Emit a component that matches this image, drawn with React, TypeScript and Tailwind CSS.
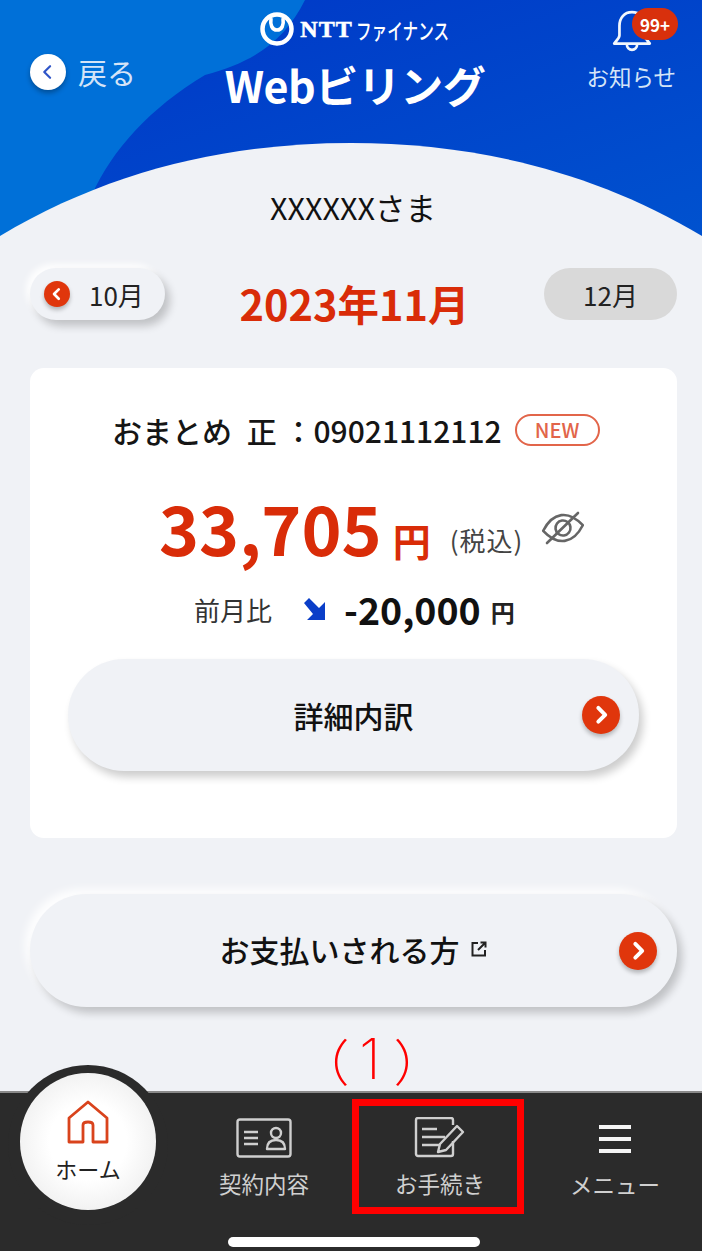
const jp = { fontFamily: '"Noto Sans CJK JP", "Noto Sans", sans-serif' };

function RedChevron({ size, dir = "right" }: { size: number; dir?: "left" | "right" }) {
  return (
    <span
      className="flex shrink-0 items-center justify-center rounded-full bg-[#e0360c] shadow-[0_3px_4px_rgba(0,0,0,0.25)]"
      style={{ width: size, height: size }}
    >
      <svg viewBox="0 0 24 24" width={size * 0.62} height={size * 0.62} fill="none" stroke="white" strokeWidth="4" strokeLinecap="round" strokeLinejoin="round">
        <path d={dir === "right" ? "M9.5 5l7 7-7 7" : "M14.5 5l-7 7 7 7"} />
      </svg>
    </span>
  );
}

function Header() {
  return (
    <div className="relative h-[240px] shrink-0 text-white">
      <svg className="absolute inset-0" width="702" height="240" viewBox="0 0 702 240">
        <defs>
          <linearGradient id="hdr" x1="0" y1="0" x2="1" y2="1">
            <stop offset="0" stopColor="#0036c6" />
            <stop offset="1" stopColor="#0052cf" />
          </linearGradient>
        </defs>
        <rect width="702" height="240" fill="url(#hdr)" />
        <path d="M0 0H305C285 40 255 62 205 75C150 108 112 150 92 195L0 240Z" fill="#0070d8" />
        <path d="M0 240V236C110 170 230 143 351 143C472 143 592 170 702 236V240Z" fill="#f0f2f6" />
      </svg>
      <div className="relative grid grid-cols-[1fr_auto_1fr]">
        <div className="flex items-center gap-[12px] self-start pl-[30px] pt-[54px]">
          <span className="flex h-[36px] w-[36px] items-center justify-center rounded-full bg-white shadow-[0_3px_5px_rgba(0,0,0,0.3)]">
            <svg viewBox="0 0 24 24" width="20" height="20" fill="none" stroke="#2f55c8" strokeWidth="2.6" strokeLinecap="round" strokeLinejoin="round">
              <path d="M14.5 5l-7 7 7 7" />
            </svg>
          </span>
          <span className="text-[29px] leading-[36px] text-[#d5e4f7]">戻る</span>
        </div>
        <div className="flex flex-col items-center pt-[10px] pl-[8px]">
          <div className="flex h-[38px] items-center gap-[5px]">
            <svg viewBox="0 0 36 36" width="36" height="36" fill="none" stroke="white">
              <circle cx="18" cy="18" r="14.5" strokeWidth="4.5" />
              <path d="M12 7c-1 7 1 12 6 12s7-5 6-12" strokeWidth="3.600" />
            </svg>
            <span className="flex items-center font-bold leading-none whitespace-nowrap">
              <span className="font-['Liberation_Serif'] text-[24px] tracking-[1px] [-webkit-text-stroke:0.6px_white]">NTT</span>
              <span className="ml-[3px] inline-block w-[95px] origin-left scale-x-[0.71] text-[22px] font-medium">ファイナンス</span>
            </span>
          </div>
          <span className="mt-[6px] text-[43px] leading-[60px] font-bold tracking-[-0.5px] whitespace-nowrap">Webビリング</span>
        </div>
        <div className="flex flex-col items-end pr-[26px] pt-[8px]">
          <div className="relative mr-[22px] h-[46px] w-[44px]">
            <svg viewBox="0 0 40 44" width="44" height="46" fill="none" stroke="#f2f7fd" strokeWidth="2.600" strokeLinejoin="round">
              <path d="M20 4c-7.500 0-12 5.500-12 13v9c0 3-3 5-5 8h34c-2-3-5-5-5-8v-9c0-7.500-4.500-13-12-13z" />
              <path d="M15 34c0 4 2.500 6 5 6s5-2 5-6" />
            </svg>
            <span className="absolute right-[-24px] top-0 flex h-[32px] w-[46px] items-center justify-center rounded-[16px] bg-[#d8300c] text-[17px] font-bold leading-none">99+</span>
          </div>
          <span className="mt-[8px] text-[22.5px] leading-[28px] text-[#d5e4f7]">お知らせ</span>
        </div>
      </div>
      <div className="absolute inset-x-0 top-[185px] pl-[4px] text-center text-[30.5px] leading-[44px] text-[#111]">XXXXXXさま</div>
    </div>
  );
}

function MonthRow() {
  return (
    <div className="mt-[28px] flex h-[64px] shrink-0 items-start justify-between pl-[30px] pr-[25px]">
      <div className="flex h-[52px] w-[135px] items-center gap-[19px] rounded-full bg-[#f0f2f6] pl-[14px] shadow-[5px_6px_8px_rgba(0,0,0,0.2),-4px_-4px_6px_rgba(255,255,255,0.9)]">
        <RedChevron size={26} dir="left" />
        <span className="text-[26px] text-[#222]">10月</span>
      </div>
      <div className="mt-[9px] text-[41.5px] leading-[52px] font-bold text-[#d92c08]">2023年11月</div>
      <div className="flex h-[52px] w-[133px] items-center justify-center rounded-full bg-[#d9d9d9] text-[26px] text-[#222]">12月</div>
    </div>
  );
}

function PillButton({ label, className, textClass, chevronGap, external }: { label: string; className: string; textClass: string; chevronGap: string; external?: boolean }) {
  return (
    <div className={`relative flex items-center justify-center rounded-full bg-[#f0f2f6] ${className}`}>
      <span className={`flex items-center gap-[10px] text-[30px] font-medium leading-none text-[#111] ${textClass}`}>
        {label}
        {external && (
          <svg viewBox="0 0 18 18" width="18" height="18" fill="none" stroke="#222" strokeWidth="2">
            <path d="M8 3H2.500v12.500H15V10" />
            <path d="M8 10l7-7M10.500 2.500h5v5" />
          </svg>
        )}
      </span>
      <span className={`absolute top-1/2 -translate-y-1/2 ${chevronGap}`}>
        <RedChevron size={38} />
      </span>
    </div>
  );
}

function Card() {
  return (
    <div className="ml-[30px] mr-[25px] mt-[36px] h-[470px] shrink-0 rounded-[14px] bg-white">
      <div className="flex items-center pl-[82px] pt-[41px]">
        <span className="text-[30px] leading-[42px] font-medium text-[#151515] whitespace-nowrap">
          おまとめ <span className="ml-[8px]">正 ：09021112112</span>
        </span>
        <span className="ml-[13px] flex h-[32px] w-[85px] items-center justify-center rounded-full border-2 border-[#e2654a] text-[20px] font-medium text-[#e2654a]">NEW</span>
      </div>
      <div className="mt-[29px] flex items-baseline pl-[129px]">
        <span className="text-[68px] leading-[94px] font-bold text-[#d92c08]">33,705</span>
        <span className="ml-[11px] text-[38px] leading-none font-bold text-[#d92c08]">円</span>
        <span className="ml-[19px] -translate-y-[5px] text-[26px] leading-none tracking-[1px] text-[#444]">(税込)</span>
        <svg className="ml-[18px] mt-[31px] self-start" viewBox="0 0 44 34" width="44" height="34" fill="none" stroke="#666" strokeWidth="2.600" strokeLinecap="round" strokeLinejoin="round">
          <g transform="rotate(-8 22 17)">
            <path d="M2 17C9 7 15 4 22 4s13 3 20 13c-7 10-13 13-20 13S9 27 2 17z" />
            <circle cx="22" cy="17" r="7.500" />
          </g>
          <path d="M6 32L37 2" />
        </svg>
      </div>
      <div className="mt-[9px] flex items-center pl-[164px]">
        <span className="text-[26px] text-[#333]">前月比</span>
        <svg className="ml-[30px]" viewBox="0 0 26 26" width="26" height="26" fill="#0a3ec8">
          <path d="M2 7L7 2l10 10 6-6v18H5l6-6z" />
        </svg>
        <span className="ml-[16px] text-[37.5px] leading-[52px] font-bold text-[#111]">-20,000</span>
        <span className="ml-[10px] mt-[6px] text-[24px] font-bold text-[#222]">円</span>
      </div>
      <div className="mt-[24px] px-[38px]">
        <PillButton label="詳細内訳" className="h-[112px] shadow-[4px_6px_8px_rgba(0,0,0,0.2)]" textClass="" chevronGap="right-[19px]" />
      </div>
    </div>
  );
}

function NavItem({ label, icon, className }: { label: string; icon: React.ReactNode; className: string }) {
  return (
    <div className={`flex flex-col items-center ${className}`}>
      <div className="flex h-[44px] items-center">{icon}</div>
      <span className="mt-[8px] text-[22.5px] leading-[30px] text-[#d0d0d0] whitespace-nowrap">{label}</span>
    </div>
  );
}

function BottomNav() {
  return (
    <div className="relative h-[160px] shrink-0 border-t-2 border-[#8a8a8a] bg-[#2b2b2b]">
      <div className="absolute inset-x-0 bottom-0 top-[-28px] overflow-hidden">
        <div className="ml-[8px] h-[160px] w-[160px] rounded-full bg-[#2b2b2b]" />
      </div>
      <div className="absolute left-[20px] top-[-20px] flex h-[137px] w-[136px] flex-col items-center rounded-full bg-[radial-gradient(circle,#ffffff_40%,#e6e6e6_100%)] pt-[27px]">
        <svg viewBox="0 0 44 44" width="44" height="44" fill="none" stroke="#d9431c" strokeWidth="2.800" strokeLinejoin="round">
          <path d="M3 18L22 2l19 16v24H27V25c0-2-2-3-5-3s-5 1-5 3v17H3z" />
        </svg>
        <span className="mt-[9px] text-[22px] leading-[30px] text-[#222]">ホーム</span>
      </div>
      <div className="relative flex">
        <NavItem
          label="契約内容"
          className="ml-[219px] w-[90px] pt-[23px]"
          icon={
            <svg viewBox="0 0 56 40" width="56" height="40" fill="none" stroke="#cfcfcf" strokeWidth="2.400">
              <rect x="1.500" y="1.500" width="53" height="37" rx="2.500" />
              <path d="M8 14h14M8 20h14M8 26h14" />
              <circle cx="40" cy="15" r="5" />
              <path d="M31 31c0-6 3-9 9-9s9 3 9 9z" strokeLinejoin="round" />
            </svg>
          }
        />
        <div className="ml-[43px] mt-[6px] flex h-[115px] w-[172px] justify-center border-[7px] border-[#ff0000] pl-[4px]">
          <NavItem
            label="お手続き"
            className="pt-[10px]"
            icon={
              <svg viewBox="0 0 52 42" width="52" height="42" fill="none" stroke="#cfcfcf" strokeWidth="2.400" strokeLinejoin="round">
                <path d="M39 24V37a2 2 0 0 1-2 2H4a2 2 0 0 1-2-2V3a2 2 0 0 1 2-2h33a2 2 0 0 1 2 2V8" />
                <path d="M8 12h15M8 20h23M8 28h18" />
                <path d="M24 35l2-8L43 9l6 6-17 18z" />
              </svg>
            }
          />
        </div>
        <NavItem
          label="メニュー"
          className="ml-[49px] w-[84px] pt-[24px]"
          icon={
            <svg viewBox="0 0 32 30" width="32" height="30" fill="#f5f5f5">
              <rect y="1" width="32" height="4" />
              <rect y="13" width="32" height="4" />
              <rect y="25" width="32" height="4" />
            </svg>
          }
        />
      </div>
      <div className="absolute bottom-[4px] left-[228px] h-[10px] w-[252px] rounded-full bg-white" />
    </div>
  );
}

export default function App() {
  return (
    <div className="flex h-[1251px] w-[702px] flex-col overflow-hidden bg-[#f0f2f6]" style={jp}>
      <Header />
      <MonthRow />
      <Card />
      <div className="ml-[30px] mr-[25px] mt-[56px] shrink-0">
        <PillButton
          label="お支払いされる方"
          external
          className="h-[113px] shadow-[5px_6px_8px_rgba(0,0,0,0.2),-5px_-5px_8px_rgba(255,255,255,0.9)]"
          textClass="pb-[4px]"
          chevronGap="right-[20px]"
        />
      </div>
      <div className="flex flex-1 items-center justify-center pl-[41px] pt-[20px] text-[#ff0000]">
        <span className="text-[50px] font-light leading-[60px]">（</span>
        <span className="ml-[10px] font-['Inter'] text-[56px] font-extralight leading-[60px]">1</span>
        <span className="ml-[13px] text-[50px] font-light leading-[60px]">）</span>
      </div>
      <BottomNav />
    </div>
  );
}
